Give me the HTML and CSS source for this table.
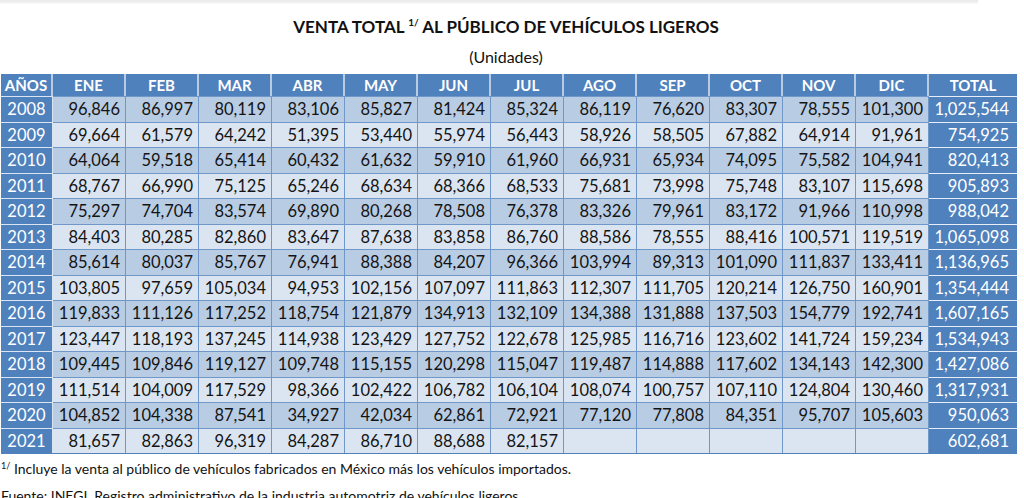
FILE: index.html
```html
<!DOCTYPE html>
<html lang="es">
<head>
<meta charset="utf-8">
<title>Venta total al público de vehículos ligeros</title>
<link rel="stylesheet" href="styles.css">
</head>
<body>
<div class="topline"></div>
<div class="page">
  <h1 class="title">VENTA TOTAL <sup>1/</sup> AL PÚBLICO DE VEHÍCULOS LIGEROS</h1>
  <div class="subtitle">(Unidades)</div>
  <table class="grid">
    <colgroup>
      <col class="w-year"><col class="w-m"><col class="w-m"><col class="w-m"><col class="w-m"><col class="w-m"><col class="w-m"><col class="w-m"><col class="w-m"><col class="w-m"><col class="w-m"><col class="w-m"><col class="w-m"><col class="w-total">
    </colgroup>
    <thead>
      <tr>
        <th>AÑOS</th><th>ENE</th><th>FEB</th><th>MAR</th><th>ABR</th><th>MAY</th><th>JUN</th><th>JUL</th><th>AGO</th><th>SEP</th><th>OCT</th><th>NOV</th><th>DIC</th><th class="c-total">TOTAL</th>
      </tr>
    </thead>
    <tbody>
      <tr class="dark"><td class="yr">2008</td><td>96,846</td><td>86,997</td><td>80,119</td><td>83,106</td><td>85,827</td><td>81,424</td><td>85,324</td><td>86,119</td><td>76,620</td><td>83,307</td><td>78,555</td><td>101,300</td><td class="tot">1,025,544</td></tr>
      <tr class="light"><td class="yr">2009</td><td>69,664</td><td>61,579</td><td>64,242</td><td>51,395</td><td>53,440</td><td>55,974</td><td>56,443</td><td>58,926</td><td>58,505</td><td>67,882</td><td>64,914</td><td>91,961</td><td class="tot">754,925</td></tr>
      <tr class="dark"><td class="yr">2010</td><td>64,064</td><td>59,518</td><td>65,414</td><td>60,432</td><td>61,632</td><td>59,910</td><td>61,960</td><td>66,931</td><td>65,934</td><td>74,095</td><td>75,582</td><td>104,941</td><td class="tot">820,413</td></tr>
      <tr class="light"><td class="yr">2011</td><td>68,767</td><td>66,990</td><td>75,125</td><td>65,246</td><td>68,634</td><td>68,366</td><td>68,533</td><td>75,681</td><td>73,998</td><td>75,748</td><td>83,107</td><td>115,698</td><td class="tot">905,893</td></tr>
      <tr class="dark"><td class="yr">2012</td><td>75,297</td><td>74,704</td><td>83,574</td><td>69,890</td><td>80,268</td><td>78,508</td><td>76,378</td><td>83,326</td><td>79,961</td><td>83,172</td><td>91,966</td><td>110,998</td><td class="tot">988,042</td></tr>
      <tr class="light"><td class="yr">2013</td><td>84,403</td><td>80,285</td><td>82,860</td><td>83,647</td><td>87,638</td><td>83,858</td><td>86,760</td><td>88,586</td><td>78,555</td><td>88,416</td><td>100,571</td><td>119,519</td><td class="tot">1,065,098</td></tr>
      <tr class="dark"><td class="yr">2014</td><td>85,614</td><td>80,037</td><td>85,767</td><td>76,941</td><td>88,388</td><td>84,207</td><td>96,366</td><td>103,994</td><td>89,313</td><td>101,090</td><td>111,837</td><td>133,411</td><td class="tot">1,136,965</td></tr>
      <tr class="light"><td class="yr">2015</td><td>103,805</td><td>97,659</td><td>105,034</td><td>94,953</td><td>102,156</td><td>107,097</td><td>111,863</td><td>112,307</td><td>111,705</td><td>120,214</td><td>126,750</td><td>160,901</td><td class="tot">1,354,444</td></tr>
      <tr class="dark"><td class="yr">2016</td><td>119,833</td><td>111,126</td><td>117,252</td><td>118,754</td><td>121,879</td><td>134,913</td><td>132,109</td><td>134,388</td><td>131,888</td><td>137,503</td><td>154,779</td><td>192,741</td><td class="tot">1,607,165</td></tr>
      <tr class="light"><td class="yr">2017</td><td>123,447</td><td>118,193</td><td>137,245</td><td>114,938</td><td>123,429</td><td>127,752</td><td>122,678</td><td>125,985</td><td>116,716</td><td>123,602</td><td>141,724</td><td>159,234</td><td class="tot">1,534,943</td></tr>
      <tr class="dark"><td class="yr">2018</td><td>109,445</td><td>109,846</td><td>119,127</td><td>109,748</td><td>115,155</td><td>120,298</td><td>115,047</td><td>119,487</td><td>114,888</td><td>117,602</td><td>134,143</td><td>142,300</td><td class="tot">1,427,086</td></tr>
      <tr class="light"><td class="yr">2019</td><td>111,514</td><td>104,009</td><td>117,529</td><td>98,366</td><td>102,422</td><td>106,782</td><td>106,104</td><td>108,074</td><td>100,757</td><td>107,110</td><td>124,804</td><td>130,460</td><td class="tot">1,317,931</td></tr>
      <tr class="dark"><td class="yr">2020</td><td>104,852</td><td>104,338</td><td>87,541</td><td>34,927</td><td>42,034</td><td>62,861</td><td>72,921</td><td>77,120</td><td>77,808</td><td>84,351</td><td>95,707</td><td>105,603</td><td class="tot">950,063</td></tr>
      <tr class="light"><td class="yr">2021</td><td>81,657</td><td>82,863</td><td>96,319</td><td>84,287</td><td>86,710</td><td>88,688</td><td>82,157</td><td></td><td></td><td></td><td></td><td></td><td class="tot">602,681</td></tr>
    </tbody>
  </table>
  <p class="note"><sup>1/</sup> Incluye la venta al público de vehículos fabricados en México más los vehículos importados.</p>
  <p class="note">Fuente: INEGI. Registro administrativo de la industria automotriz de vehículos ligeros.</p>
</div>
</body>
</html>
```
FILE: styles.css
```css
html, body {
  margin: 0;
  padding: 0;
  background: #ffffff;
}
body {
  font-family: Lato, "Open Sans", "Liberation Sans", sans-serif;
  color: #111111;
  position: relative;
  height: 498px;
  overflow: hidden;
}
.topline {
  position: absolute;
  left: 0;
  top: 0;
  width: 978px;
  height: 2px;
  background: #ececec;
  box-shadow: 0 1px 2px rgba(0,0,0,0.08);
}
.page {
  width: 1016px;
  padding: 14px 0 0 1px;
  box-sizing: content-box;
}
.title {
  margin: 0;
  width: 1010px;
  text-align: center;
  font-size: 17px;
  font-weight: 700;
  line-height: 26px;
  color: #111111;
}
.title sup {
  font-size: 10px;
  vertical-align: 7px;
  line-height: 0;
}
.subtitle {
  margin-top: 4px;
  width: 1010px;
  text-align: center;
  font-size: 16px;
  line-height: 26px;
}
.grid {
  margin-top: 4px;
  border-collapse: separate;
  border-spacing: 0;
  table-layout: fixed;
  width: 1016px;
  border-bottom: 1px solid #4f81bd;
}
.w-year { width: 52px; }
.w-m { width: 73px; }
.w-total { width: 88px; }
.grid th {
  background: #4f81bd;
  color: #ffffff;
  font-weight: 700;
  font-size: 15px;
  height: 22px;
  padding: 0;
  text-align: center;
  border-right: 2px solid #b9cbe4;
  line-height: 22px;
  overflow: hidden;
}
.grid th.c-total { border-right: 0; }
.grid td {
  height: 24.5px;
  padding: 0 5px 0 0;
  text-align: right;
  font-size: 16.5px;
  line-height: 20px;
  border-right: 1px solid #6f98c8;
  border-top: 1px solid #6f98c8;
  color: #141414;
  white-space: nowrap;
}
.grid tr.dark td { background: #b8cce4; }
.grid tr.light td { background: #dbe5f1; }
.grid tr td.yr {
  background: #4f81bd;
  color: #ffffff;
  text-align: center;
  padding: 0;
  border-top: 1px solid #dbe5f1;
  border-right: 1px solid #dbe5f1;
}
.grid tr td.tot {
  background: #4f81bd;
  color: #ffffff;
  border-top: 1px solid #e8eef7;
  border-right: 0;
  padding-right: 8px;
}
.note {
  margin: 0;
  font-size: 14px;
  line-height: 25px;
  padding-top: 2px;
}
.note sup {
  font-size: 9px;
  vertical-align: 5px;
  line-height: 0;
}
```
